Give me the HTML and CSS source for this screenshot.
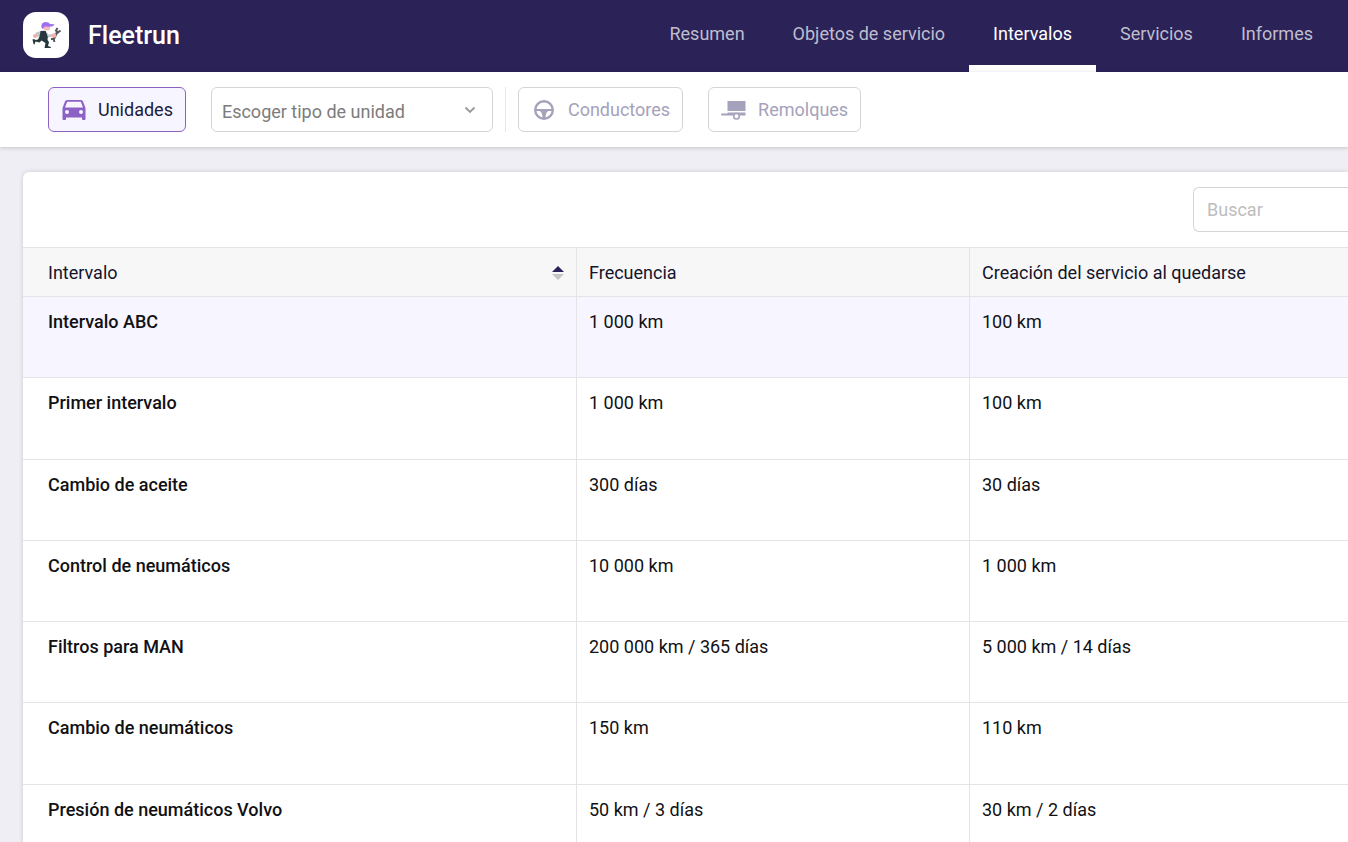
FILE: index.html
```
<!DOCTYPE html>
<html lang="es">
<head>
<meta charset="utf-8">
<title>Fleetrun</title>
<link rel="stylesheet" href="styles.css">
</head>
<body>
<header class="topbar">
  <a class="brand" href="#">
    <span class="logo">
      <svg viewBox="0 0 46 46" width="46" height="46" aria-hidden="true">
        <path d="M18 19 L13 20.500 L11 24 L12.500 26 L17 24 Z" fill="#c5c6ca"/>
        <circle cx="12" cy="24" r="2" fill="#efb3ae"/>
        <path d="M17.500 19 L22.500 18.800 L25 24 L24.500 28 L26 30 L25 34 L27.800 35 V36 H21.500 L22.500 31 L18.500 28.500 L16.500 30.500 L12.500 29.500 L11.500 32.500 L10.500 32 L9.500 27.500 L11 27 L12.500 28 L15 27.500 L16.500 24.500 Z" fill="#25373d"/>
        <path d="M23 19 L25.500 22.500 L30 22 L30 24.500 L25 25.500 Z" fill="#c5c6ca"/>
        <path d="M20 14 H27 V17 Q26.500 18.800 24 18.500 L21 18 Z" fill="#f6bcb8"/>
        <path d="M18.500 16 Q17.500 10.500 22.500 10 Q26 10 27 12 L31.500 12.300 Q30.500 14.800 26.500 14.800 L21.500 14.500 L20 17 Z" fill="#a06ff0"/>
        <path d="M30.500 27.500 L34.500 19.500" stroke="#55585b" stroke-width="2.400"/>
        <path d="M34.500 16 L33 18.500 L35 20.500 L37.500 18.500 M28 27 L30.500 27 L31.500 30" fill="none" stroke="#55585b" stroke-width="2"/>
        <circle cx="31" cy="23.500" r="2.300" fill="#f3b1ae"/>
      </svg>
    </span>
    <span class="brand-name">Fleetrun</span>
  </a>
  <nav class="nav">
    <a href="#">Resumen</a>
    <a href="#">Objetos de servicio</a>
    <a class="active" href="#" aria-current="page">Intervalos</a>
    <a href="#">Servicios</a>
    <a href="#">Informes</a>
  </nav>
</header>
<section class="filters">
  <button class="filter selected" type="button">
    <svg viewBox="0 0 24 20" width="24" height="20" aria-hidden="true">
      <path fill="currentColor" fill-rule="evenodd" d="M5 0 H19 Q20.500 0 21 1.500 L23.500 8 V19 Q23.500 20 22.500 20 H21 Q20 20 20 19 V17.500 H4 V19 Q4 20 3 20 H1.500 Q.5 20 .5 19 V8 L3 1.500 Q3.500 0 5 0 Z M5.200 1.800 L3 7.500 H21 L18.800 1.800 Z M5 10 A2 2 0 1 0 5 14 A2 2 0 1 0 5 10 Z M19 10 A2 2 0 1 0 19 14 A2 2 0 1 0 19 10 Z"/>
    </svg>
    Unidades
  </button>
  <div class="select-box">
    <select aria-label="Tipo de unidad">
      <option>Escoger tipo de unidad</option>
    </select>
    <svg class="chevron" viewBox="0 0 12 8" width="12" height="8" aria-hidden="true">
      <path d="M1.500 1.500 L6 6 L10.500 1.500" fill="none" stroke="#999" stroke-width="1.800"/>
    </svg>
  </div>
  <div class="others">
    <button class="filter drivers" type="button">
      <svg viewBox="0 0 20 20" width="20" height="20" aria-hidden="true">
        <circle cx="10" cy="10" r="8.800" fill="none" stroke="currentColor" stroke-width="2.400"/>
        <path fill="currentColor" d="M2 9 H18 V11 H14.500 Q11.500 12 11.500 18 H8.500 Q8.500 12 5.500 11 H2 Z"/>
      </svg>
      Conductores
    </button>
    <button class="filter trailers" type="button">
      <svg viewBox="0 0 25 20" width="25" height="20" aria-hidden="true">
        <path fill="currentColor" d="M6.500 1 H24.500 V11 H6.500 Z M0 14.500 Q0 13.500 1 13.500 H6.500 V12.500 H24.500 V15.500 H19 A3.600 3.600 0 0 0 12 15.500 H1 Q0 15.500 0 14.500 Z"/>
        <circle cx="15.500" cy="16.200" r="2.800" fill="#fff" stroke="currentColor" stroke-width="1.600"/>
      </svg>
      Remolques
    </button>
  </div>
</section>
<main class="content">
  <section class="card">
    <div class="toolbar">
      <input class="search" type="search" placeholder="Buscar" aria-label="Buscar">
    </div>
    <table class="intervals">
      <colgroup><col class="col-name"><col class="col-frequency"><col></colgroup>
      <thead>
        <tr>
          <th scope="col" aria-sort="ascending">
            <div class="sortable">Intervalo
              <svg viewBox="0 0 12 14" width="12" height="14" aria-hidden="true">
                <path d="M0 6 L6 0 L12 6 Z" fill="#2b2358"/>
                <path d="M0 8 L6 14 L12 8 Z" fill="#c4c4c4"/>
              </svg>
            </div>
          </th>
          <th scope="col">Frecuencia</th>
          <th scope="col">Creación del servicio al quedarse</th>
        </tr>
      </thead>
      <tbody>
        <tr class="highlight"><td>Intervalo ABC</td><td>1 000 km</td><td>100 km</td></tr>
        <tr><td>Primer intervalo</td><td>1 000 km</td><td>100 km</td></tr>
        <tr><td>Cambio de aceite</td><td>300 días</td><td>30 días</td></tr>
        <tr><td>Control de neumáticos</td><td>10 000 km</td><td>1 000 km</td></tr>
        <tr><td>Filtros para MAN</td><td>200 000 km / 365 días</td><td>5 000 km / 14 días</td></tr>
        <tr><td>Cambio de neumáticos</td><td>150 km</td><td>110 km</td></tr>
        <tr><td>Presión de neumáticos Volvo</td><td>50 km / 3 días</td><td>30 km / 2 días</td></tr>
      </tbody>
    </table>
  </section>
</main>
</body>
</html>
```

FILE: styles.css
```
* { box-sizing: border-box; }

body {
  margin: 0;
  height: 100vh;
  overflow: hidden;
  background: #efeef4;
  color: #111114;
  font: 18px/24px Roboto, sans-serif;
}

button, input, select { font: inherit; }

.topbar {
  display: flex;
  justify-content: space-between;
  height: 72px;
  padding: 0 11px 0 23px;
  background: #2b2358;
}

.brand {
  display: flex;
  align-items: center;
  gap: 19px;
  padding-bottom: 2px;
  color: #fff;
  text-decoration: none;
}

.logo {
  width: 46px;
  height: 46px;
  border-radius: 13px;
  background: #fff;
}

.logo svg { display: block; }

.brand-name {
  padding-top: 2px;
  font-size: 25px;
  font-weight: 500;
}

.nav {
  display: flex;
}

.nav a {
  padding: 22px 24px 20px;
  border-bottom: 7px solid transparent;
  color: #bfbdcd;
  text-decoration: none;
}

.nav .active {
  border-color: #fff;
  color: #fff;
}

.filters {
  position: relative;
  display: flex;
  align-items: center;
  height: 75px;
  padding: 0 48px;
  background: #fff;
  box-shadow: 0 1px 4px rgba(0, 0, 0, .18);
}

.filter {
  display: flex;
  align-items: center;
  gap: 12px;
  height: 45px;
  padding: 0 12px 0 13px;
  border: 1px solid #d4d4d6;
  border-radius: 6px;
  background: #fff;
  color: #a5a2bb;
}

.filter.selected {
  border-color: #8c62c4;
  background: #f7f5ff;
  color: #1b1b3a;
}

.filter.selected svg { color: #8c62c4; }

.filter.drivers {
  gap: 14px;
  padding: 0 12px 0 15px;
}

.select-box {
  display: grid;
  align-items: center;
  width: 282px;
  margin: 0 12px 0 25px;
}

.select-box > * { grid-area: 1 / 1; }

.select-box select {
  width: 100%;
  height: 45px;
  padding: 4px 10px 0;
  border: 1px solid #d4d4d6;
  border-radius: 6px;
  appearance: none;
  background: #fff;
  color: #7c7c7c;
}

.chevron {
  justify-self: end;
  margin-right: 17px;
  pointer-events: none;
}

.others {
  display: flex;
  gap: 25px;
  padding-left: 12px;
  border-left: 1px solid #e8e8ea;
}

.trailers { padding: 0 12px; }

.content { padding: 25px 0 0 23px; }

.card {
  border-radius: 6px 0 0 0;
  background: #fff;
  box-shadow: 0 0 4px rgba(0, 0, 0, .16);
}

.toolbar {
  display: flex;
  justify-content: flex-end;
  padding: 15px 0;
}

.search {
  width: 155px;
  height: 45px;
  padding: 0 13px;
  border: 1px solid #d4d4d6;
  border-right: 0;
  border-radius: 6px 0 0 6px;
  background: #fff;
}

.search::placeholder { color: #bdbdbd; }

.intervals {
  width: 100%;
  border-spacing: 0;
  table-layout: fixed;
}

.col-name { width: 554px; }
.col-frequency { width: 393px; }

.intervals th {
  height: 50px;
  padding: 2px 12px 0;
  border: 0 solid #e4e4e6;
  border-width: 1px 1px 1px 0;
  background: #f7f7f7;
  color: #14142b;
  font-weight: 400;
  text-align: left;
}

.intervals td {
  height: 81px;
  padding: 13px 12px;
  border: 0 solid #e4e4e6;
  border-width: 0 1px 1px 0;
  vertical-align: top;
}

.intervals tr > :first-child { padding-left: 25px; }
.intervals tr > :last-child { border-right: 0; }
.intervals td:first-child { font-weight: 500; }
.intervals tbody tr:nth-child(4n + 2) td { height: 82px; }
.highlight { background: #f7f5ff; }

.sortable {
  display: flex;
  align-items: center;
  justify-content: space-between;
}
```
